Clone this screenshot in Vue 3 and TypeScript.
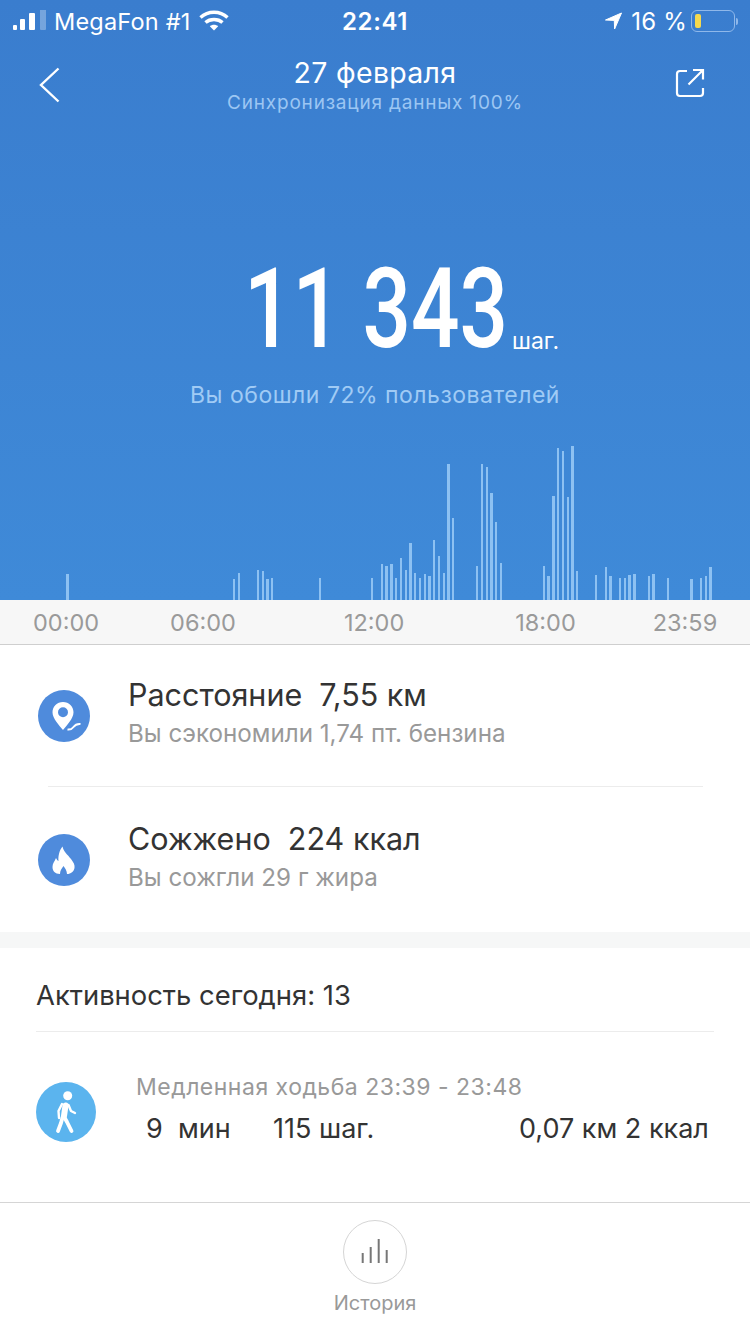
<script setup lang="ts">
interface Bar {
  x: number;
  w: number;
  h: number;
}

// x, width, height read off the day chart
const bars: Bar[] = [
  [66, 3, 26], [233, 2, 21], [238, 2, 27], [257, 2, 30], [262, 2, 29], [266, 3, 21], [271, 2, 22],
  [319, 2, 22], [371, 2, 22], [381, 2, 36], [385, 3, 34], [390, 3, 36], [395, 2, 22], [400, 2, 42],
  [405, 2, 30], [409, 3, 57], [414, 2, 27], [419, 2, 22], [424, 2, 26], [428, 3, 24], [433, 2, 60],
  [438, 2, 44], [443, 2, 27], [447, 3, 136], [452, 2, 82], [476, 2, 34], [481, 2, 136], [486, 2, 133],
  [490, 3, 107], [495, 2, 78], [500, 2, 37], [543, 2, 34], [547, 3, 24], [552, 3, 104], [557, 2, 152],
  [562, 2, 149], [567, 2, 103], [571, 3, 154], [576, 2, 29], [595, 2, 25], [605, 2, 33], [609, 3, 24],
  [619, 2, 22], [624, 2, 22], [628, 3, 25], [633, 3, 26], [648, 2, 24], [652, 3, 26], [667, 2, 22],
  [690, 3, 21], [700, 2, 22], [705, 2, 24], [709, 3, 33],
].map(([x, w, h]) => ({ x, w, h }));

const chartHeight = 160;
const axisLabels = ["00:00", "06:00", "12:00", "18:00", "23:59"];
</script>

<template>
  <div class="page">
    <section class="hero">
      <div class="status">
        <div class="status-left">
          <svg class="signal" width="36" height="22" viewBox="0 0 36 22">
            <rect x="1" y="15" width="4" height="5" rx="1" fill="#fff" />
            <rect x="8" y="9" width="5" height="11" rx="1" fill="#fff" />
            <rect x="17" y="3" width="6" height="17" rx="1" fill="#fff" />
            <rect x="28" y="-1" width="6" height="21" rx="1" fill="#fff" opacity="0.3" />
          </svg>
          <span>MegaFon #1</span>
          <svg class="wifi" width="30" height="22" viewBox="0 0 30 22">
            <path d="M1.5 7.5C9 .5 21 .5 28.5 7.5" fill="none" stroke="#fff" stroke-width="3.4" />
            <path d="M6.5 12.5C11 8.5 19 8.5 23.5 12.5" fill="none" stroke="#fff" stroke-width="3.4" />
            <path d="M10.8 16.2c2.4-2 6-2 8.4 0L15 20.6z" fill="#fff" />
          </svg>
        </div>
        <div class="status-time">22:41</div>
        <div class="status-right">
          <svg width="20" height="20" viewBox="0 0 20 20">
            <path d="M18.500 2 2.500 9l8.800.4.300 8.600z" fill="#fff" stroke="#fff" stroke-width="1" stroke-linejoin="round" />
          </svg>
          <span class="pct">16 %</span>
          <div class="battery">
            <div class="battery-level"></div>
          </div>
          <div class="battery-cap"></div>
        </div>
      </div>

      <div class="nav">
        <svg class="back" width="22" height="36" viewBox="0 0 22 36">
          <path d="M19.5 1.5 2 18l17.5 16.5" fill="none" stroke="#fff" stroke-width="2.4" />
        </svg>
        <div class="nav-title">
          <div class="date">27 февраля</div>
          <div class="sync">Синхронизация данных 100%</div>
        </div>
        <svg class="share" width="30" height="30" viewBox="0 0 30 30">
          <path d="M12 3H5a3 3 0 0 0-3 3v19a3 3 0 0 0 3 3h20a3 3 0 0 0 3-3v-5" fill="none" stroke="#fff" stroke-width="2.2" />
          <path d="M13.500 16.500 27.500 2.500M18 2h10v9.500" fill="none" stroke="#fff" stroke-width="2.2" />
        </svg>
      </div>

      <div class="steps">
        <span class="steps-num">11 343</span>
        <span class="steps-unit">шаг.</span>
      </div>
      <div class="beat">Вы обошли 72% пользователей</div>

      <svg class="chart" width="750" :height="chartHeight" :viewBox="`0 0 750 ${chartHeight}`">
        <rect
          v-for="(bar, idx) in bars"
          :key="idx"
          :x="bar.x"
          :y="chartHeight - bar.h"
          :width="bar.w"
          :height="bar.h"
          fill="#8dc1f2"
        />
      </svg>
    </section>

    <div class="axis">
      <span v-for="label in axisLabels" :key="label">{{ label }}</span>
    </div>

    <section class="stats">
      <div class="stat stat-first">
        <div class="stat-icon">
          <svg width="52" height="52" viewBox="0 0 52 52">
            <path
              fill-rule="evenodd"
              d="M25 12c6 0 10.500 4.600 10.500 10.200 0 6.300-6.800 13.300-10.500 17.800-3.700-4.500-10.500-11.500-10.500-17.800C14.500 16.600 19 12 25 12zm0 5.200a5 5 0 1 0 0 10 5 5 0 0 0 0-10z"
              fill="#fff"
            />
            <path d="M29.500 39.500c3 .5 4.500-.5 6-2.500s3-3.500 7-3" fill="none" stroke="#fff" stroke-width="2" />
          </svg>
        </div>
        <div class="stat-text">
          <div class="stat-main">Расстояние&nbsp; 7,55 км</div>
          <div class="stat-sub">Вы сэкономили 1,74 пт. бензина</div>
        </div>
      </div>
      <div class="stat-line"></div>
      <div class="stat stat-second">
        <div class="stat-icon">
          <svg width="52" height="52" viewBox="0 0 52 52">
            <path
              d="M24.500 12.500c1 5 5 8 8.500 12.500 2.500 3.300 4 6 3.500 9-.7 3.500-3.500 6-7.500 6-.2-3.500-1.500-5-3.500-8-2 3-3.500 4.500-3.500 8-5 0-7.500-3-7.500-7 0-3.500 2-5.500 3.500-9 .8 1.500 1.300 2.500 2.500 3-.5-5 1-11 4-14.500z"
              fill="#fff"
            />
          </svg>
        </div>
        <div class="stat-text">
          <div class="stat-main">Сожжено&nbsp; 224 ккал</div>
          <div class="stat-sub">Вы сожгли 29 г жира</div>
        </div>
      </div>
    </section>

    <div class="gap-band"></div>

    <section class="activity">
      <div class="activity-title">Активность сегодня: 13</div>
      <div class="activity-row">
        <div class="walk-icon">
          <svg width="60" height="60" viewBox="0 0 60 60" fill="none" stroke="#fff" stroke-linecap="round" stroke-linejoin="round">
            <circle cx="31.700" cy="13.700" r="4.500" fill="#fff" stroke="none" />
            <path d="M29.500 23.500 28 34" stroke-width="6" />
            <path d="M26.500 35.500 25 41l-3 8" stroke-width="3.800" />
            <path d="M28.500 35.500 31 40l4.500 9" stroke-width="3.800" />
            <path d="M26 22l-3.500 7 .5 7" stroke-width="2.400" />
            <path d="M32.500 23l2.500 6 4 2" stroke-width="2.400" />
          </svg>
        </div>
        <div class="walk-text">
          <div class="walk-head">Медленная ходьба 23:39 - 23:48</div>
          <div class="walk-vals">
            <span class="val-min">9&nbsp; мин</span>
            <span class="val-steps">115 шаг.</span>
            <span class="val-dist">0,07 км 2 ккал</span>
          </div>
        </div>
      </div>
    </section>

    <footer class="tabbar">
      <div class="tab-circle">
        <svg width="30" height="26" viewBox="0 0 30 26">
          <path d="M2.700 14v10M10.700 8v16M18.700 0v24M26.700 11v13" fill="none" stroke="#777" stroke-width="2" />
        </svg>
      </div>
      <div class="tab-label">История</div>
    </footer>
  </div>
</template>

<style scoped>
.page {
  width: 750px;
  height: 1334px;
  overflow: hidden;
  background: #fff;
  font-family: Inter, "Noto Sans", sans-serif;
  display: flex;
  flex-direction: column;
}

.hero {
  height: 600px;
  flex: none;
  display: flex;
  flex-direction: column;
  background: linear-gradient(180deg, #3a7dce 0%, #3f8ad8 100%);
  color: #fff;
}

.status {
  height: 42px;
  display: grid;
  grid-template-columns: 1fr auto 1fr;
  align-items: center;
  font-size: 24px;
}

.status-left {
  display: flex;
  align-items: center;
  padding-left: 12px;
  gap: 6px;
  font-size: 23.5px;
  letter-spacing: 0.2px;
}

.wifi {
  margin-left: 2px;
}

.status-time {
  font-weight: 600;
  letter-spacing: 0.6px;
}

.status-right {
  display: flex;
  align-items: center;
  justify-content: flex-end;
  padding-right: 12px;
}

.pct {
  margin-left: 8px;
  margin-right: 4px;
  letter-spacing: 0.2px;
}

.battery {
  width: 44px;
  height: 22px;
  box-sizing: border-box;
  border: 1.5px solid #8fb8ea;
  border-radius: 6px;
  padding: 3px;
}

.battery-level {
  width: 6px;
  height: 100%;
  border-radius: 2px;
  background: #f5d94e;
}

.battery-cap {
  width: 2px;
  height: 7px;
  margin-left: 1px;
  background: #8fb8ea;
  border-radius: 0 2px 2px 0;
}

.nav {
  height: 72px;
  display: grid;
  grid-template-columns: 1fr auto 1fr;
  align-items: start;
  padding-top: 9px;
  box-sizing: border-box;
}

.back {
  margin-left: 39px;
  margin-top: 16px;
}

.nav-title {
  text-align: center;
}

.date {
  font-size: 28.500px;
  line-height: 43px;
  letter-spacing: 0.3px;
}

.sync {
  font-size: 19px;
  line-height: 17px;
  color: #9cc6f3;
  letter-spacing: 0.8px;
}

.share {
  justify-self: end;
  margin-right: 45px;
  margin-top: 17px;
}

.steps {
  margin-top: 142px;
  height: 106px;
  display: flex;
  align-items: flex-end;
  padding-left: 244px;
}

.steps-num {
  font-family: Roboto, sans-serif;
  font-weight: 500;
  font-size: 112px;
  line-height: 106px;
  width: 268px;
  white-space: nowrap;
  transform: scaleX(0.763);
  transform-origin: 0 50%;
}

.steps-unit {
  font-size: 23px;
  line-height: 26px;
  margin-bottom: 8px;
}

.beat {
  margin-top: 18px;
  text-align: center;
  font-size: 23px;
  line-height: 30px;
  color: #a0cbf5;
  letter-spacing: 0.5px;
}

.chart {
  margin-top: auto;
  display: block;
}

.axis {
  height: 45px;
  flex: none;
  box-sizing: border-box;
  background: #f7f7f7;
  border-bottom: 1px solid #cfcfcf;
  display: flex;
  align-items: center;
  padding-left: 33px;
  font-size: 23.500px;
  color: #9a9a9a;
}

.axis span:nth-child(2) {
  margin-left: 71px;
}

.axis span:nth-child(3) {
  margin-left: 108px;
}

.axis span:nth-child(4) {
  margin-left: 111px;
}

.axis span:nth-child(5) {
  margin-left: 77px;
}

.stats {
  flex: none;
  height: 287px;
  display: flex;
  flex-direction: column;
}

.stat {
  display: flex;
  align-items: center;
  padding-left: 38px;
}

.stat-first {
  height: 141px;
}

.stat-second {
  height: 145px;
}

.stat-icon {
  width: 52px;
  height: 52px;
  border-radius: 50%;
  background: #4f8bdc;
}

.stat-icon svg {
  display: block;
}

.stat-text {
  margin-left: 38px;
  margin-top: -3px;
}

.stat-main {
  font-size: 30.500px;
  line-height: 40px;
  color: #333;
}

.stat-sub {
  font-size: 24.200px;
  line-height: 38px;
  color: #999;
}

.stat-line {
  height: 1px;
  margin: 0 47px 0 48px;
  background: #ececec;
}

.gap-band {
  height: 16px;
  flex: none;
  background: #f6f7f7;
}

.activity {
  flex: none;
  height: 254px;
  padding: 0 36px;
  box-sizing: border-box;
}

.activity-title {
  height: 84px;
  box-sizing: border-box;
  padding-top: 28px;
  font-size: 27.400px;
  line-height: 38px;
  color: #333;
  border-bottom: 1px solid #ececec;
}

.activity-row {
  display: flex;
  align-items: flex-start;
  padding-top: 50px;
}

.walk-icon {
  width: 60px;
  height: 60px;
  border-radius: 50%;
  background: #5bb4ee;
}

.walk-icon svg {
  display: block;
}

.walk-text {
  margin-left: 40px;
  flex: 1;
  margin-top: -10px;
}

.walk-head {
  font-size: 23px;
  line-height: 30px;
  color: #999;
  letter-spacing: 0.5px;
}

.walk-vals {
  display: flex;
  font-size: 27px;
  line-height: 40px;
  color: #333;
  margin-top: 7px;
}

.val-min {
  margin-left: 10px;
  width: 127px;
}

.val-steps {
  width: 246px;
}

.tabbar {
  flex: 1;
  border-top: 1px solid #d5d5d5;
  display: flex;
  flex-direction: column;
  align-items: center;
  padding-top: 17px;
}

.tab-circle {
  width: 64px;
  height: 64px;
  box-sizing: border-box;
  border: 1px solid #d5d5d5;
  border-radius: 50%;
  display: flex;
  align-items: center;
  justify-content: center;
}

.tab-label {
  margin-top: 5px;
  font-size: 20px;
  line-height: 28px;
  color: #999;
}
</style>
